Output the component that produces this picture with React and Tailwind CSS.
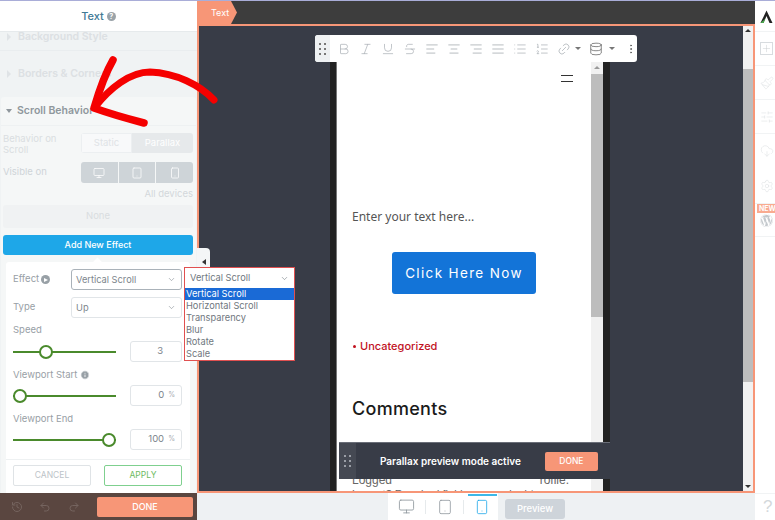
import React from "react";
import { Monitor, Tablet, Smartphone, Bold, Italic, Underline, Strikethrough, AlignLeft, AlignCenter, AlignRight, AlignJustify, List, ListOrdered, Link2, Database, EllipsisVertical, Plus, Paintbrush, SlidersHorizontal, CloudDownload, Settings, History, Undo2, Redo2, ChevronDown, Info } from "lucide-react";
import { FaWordpress } from "react-icons/fa";

const ui = "font-['Inter','Liberation_Sans',sans-serif]";

function Grip({ className = "" }) {
  return (
    <div className={"grid grid-cols-2 gap-x-[3px] gap-y-[3px] " + className}>
      {[0, 1, 2, 3, 4, 5].map((i) => <span key={i} className="w-[2px] h-[2px] bg-current" />)}
    </div>
  );
}

function Select({ text, strong }) {
  return (
    <div className={"flex-1 h-[21px] bg-white rounded-[3px] border flex items-center justify-between pl-[4px] pr-[5px] text-[9.25px] text-[#7d858c] " + (strong ? "border-[#aab2b9]" : "border-[#e1e5e8]")}>
      <span>{text}</span>
      <ChevronDown size={9} strokeWidth={1.5} className="text-[#7d858c]" />
    </div>
  );
}

function Slider({ knob, value, unit }) {
  return (
    <div className="flex items-center h-[21px]">
      <div className="relative w-[103px] h-[2px] bg-[#4a8a2c]">
        <span className={"absolute top-[-6px] w-[14px] h-[14px] rounded-full bg-white border-2 border-[#4a8a2c] " + knob} />
      </div>
      <div className="ml-[14px] w-[52px] h-[21px] rounded-[3px] border border-[#e1e5e8] flex items-center justify-end pr-[6px] text-[9.5px] text-[#7d858c] gap-[4px]">
        <span className={unit ? "" : "mr-[12px]"}>{value}</span>
        {unit && <span className="text-[7px] text-[#a5acb2]">%</span>}
      </div>
    </div>
  );
}

function Left() {
  return (
    <div className={"w-[197px] shrink-0 flex flex-col bg-[#f0f3f4] " + ui}>
      <div className="h-[31px] shrink-0 bg-white border-b border-[#e6eaec] flex items-center justify-center gap-[3px]">
        <span className="text-[11px] font-medium text-[#3f7a96]">Text</span>
        <span className="w-[9px] h-[9px] rounded-full bg-[#9aa3a9] text-white text-[7px] leading-[9px] font-bold text-center">?</span>
      </div>
      <div className="h-[65px] shrink-0">
        <div className="h-[19px] pb-[8px] pl-[7px] flex items-center gap-[7px] border-b border-[#e9edef]">
          <span className="w-0 h-0 border-y-[4px] border-y-transparent border-l-[4px] border-l-[#dfe3e6]" />
          <span className="text-[10.5px] font-semibold text-[#dce0e3]">Background Style</span>
        </div>
        <div className="h-[46px] pl-[7px] flex items-center gap-[7px]">
          <span className="w-0 h-0 border-y-[4px] border-y-transparent border-l-[4px] border-l-[#dfe3e6]" />
          <span className="text-[10.5px] font-semibold text-[#dce0e3]">Borders & Corners</span>
        </div>
      </div>
      <div className="flex-1 flex flex-col mx-px bg-[#f5f7f7] rounded-t-[3px] min-h-0">
        <div className="h-[29px] shrink-0 flex items-center pl-[5px] gap-[5px] border-b border-[#eef1f2]">
          <span className="w-0 h-0 border-x-[3px] border-x-transparent border-t-[4px] border-t-[#8f979d]" />
          <span className="text-[10.5px] font-semibold text-[#8f979d]">Scroll Behavior</span>
        </div>
        <div className="flex items-start pl-[2px] pr-[3px] pt-[7px] h-[36px] shrink-0">
          <span className="w-[78px] text-[9.5px] leading-[11px] text-[#dadee1]">Behavior on Scroll</span>
          <div className="flex-1 h-[20px] flex rounded-[3px] overflow-hidden text-[9.5px] text-[#dfe3e6]">
            <span className="w-[51px] bg-[#f8f9fa] border border-[#eceff1] flex items-center justify-center">Static</span>
            <span className="flex-1 bg-[#e6e9eb] text-white flex items-center justify-center">Parallax</span>
          </div>
        </div>
        <div className="flex items-center pl-[2px] pr-[3px] h-[21px] shrink-0">
          <span className="w-[78px] text-[9.5px] text-[#cfd4d8]">Visible on</span>
          <div className="flex-1 h-[21px] grid grid-cols-3 gap-px rounded-[3px] overflow-hidden">
            <span className="bg-[#ced4d8] flex items-center justify-center text-white"><Monitor size={12} strokeWidth={1.5} /></span>
            <span className="bg-[#ced4d8] flex items-center justify-center text-white"><Tablet size={12} strokeWidth={1.5} /></span>
            <span className="bg-[#ced4d8] flex items-center justify-center text-white"><Smartphone size={12} strokeWidth={1.5} /></span>
          </div>
        </div>
        <div className="h-[22px] shrink-0 flex items-center justify-end pr-[3px] text-[9.5px] text-[#d3d8db]">All devices</div>
        <div className="h-[23px] ml-[2px] mr-[3px] shrink-0 bg-[#f0f2f3] rounded-[3px] flex items-center justify-center text-[9.5px] text-[#d9dde0]">None</div>
        <div className="h-[20px] mt-[7px] ml-[2px] mr-[3px] shrink-0 bg-[#1ea7e8] rounded-[3px] flex items-center justify-center text-[9px] font-medium text-white">Add New Effect</div>
        <div className="relative mt-[7px] ml-[5px] w-[184px] flex-1 bg-white rounded-t-[3px] pl-[7px] pr-[8px] pt-[7px] flex flex-col">
          <span className="absolute top-[-3px] left-[88px] w-[7px] h-[7px] rotate-45 bg-white" />
          <div className="flex items-center h-[21px]">
            <span className="w-[58px] flex items-center gap-[2px] text-[9.5px] text-[#98a0a6]">
              Effect
              <span className="w-[9px] h-[9px] rounded-full bg-[#98a0a6] flex items-center justify-center">
                <span className="ml-px w-0 h-0 border-y-[2.5px] border-y-transparent border-l-[4px] border-l-white" />
              </span>
            </span>
            <Select text="Vertical Scroll" strong />
          </div>
          <div className="flex items-center h-[21px] mt-[7px]">
            <span className="w-[58px] text-[9.5px] text-[#98a0a6]">Type</span>
            <Select text="Up" />
          </div>
          <span className="mt-[6px] h-[12px] leading-[12px] text-[9.5px] text-[#98a0a6]">Speed</span>
          <div className="mt-[5px]"><Slider knob="left-[26px]" value="3" /></div>
          <span className="mt-[7px] h-[12px] flex items-center gap-[3px] text-[9.5px] text-[#98a0a6]">Viewport Start<Info size={10} strokeWidth={2} className="fill-[#98a0a6] text-white" /></span>
          <div className="mt-[4px]"><Slider knob="left-0" value="0" unit /></div>
          <span className="mt-[7px] h-[12px] leading-[12px] text-[9.5px] text-[#98a0a6]">Viewport End</span>
          <div className="mt-[4px]"><Slider knob="left-[89px]" value="100" unit /></div>
          <div className="mt-[9px] border-t border-[#eef1f2] -ml-[7px] -mr-[8px]" />
          <div className="mt-[5px] flex justify-between">
            <span className="w-[78px] h-[21px] border border-[#dfe3e6] rounded-[2px] flex items-center justify-center text-[8.5px] text-[#bcc3c8]">CANCEL</span>
            <span className="w-[78px] h-[21px] border border-[#7fd08f] rounded-[2px] flex items-center justify-center text-[8.5px] text-[#6dbb62]">APPLY</span>
          </div>
        </div>
      </div>
      <div className="h-[27px] shrink-0 bg-[#5a4640] flex items-center pl-[11px] pr-[4px]">
        <History size={12} className="text-[#75645f]" />
        <Undo2 size={12} className="ml-[16px] text-[#75645f]" />
        <Redo2 size={12} className="ml-[17px] text-[#75645f]" />
        <span className="ml-auto w-[96px] h-[20px] rounded-[2px] bg-[#f79677] text-white text-[9px] font-medium flex items-center justify-center">DONE</span>
      </div>
    </div>
  );
}

function Phone() {
  return (
    <div className="w-[280px] h-full bg-[#222222] flex px-[6px] pr-[7px] overflow-hidden">
      <div className="w-[255px] border-l border-[#777] bg-white flex flex-col pl-[15px] pr-[18px] overflow-hidden">
        <div className="self-end mt-[13px] w-[12px] h-[7px] border-y border-[#333] shrink-0" />
        <p className="mt-[127px] text-[12px] leading-[16px] text-[#555] font-['Noto_Sans',sans-serif] shrink-0">Enter your text here...</p>
        <div className={"mt-[27px] ml-[40px] w-[144px] h-[42px] shrink-0 bg-[#1374d8] rounded-[3px] flex items-center justify-center text-[13.5px] tracking-[1.35px] text-white " + ui}>Click Here Now</div>
        <div className={"mt-[44px] flex items-center gap-[4px] text-[11px] font-medium text-[#c1121f] shrink-0 " + ui}>
          <span className="ml-px w-[3px] h-[3px] rounded-full bg-[#c1121f]" />Uncategorized
        </div>
        <h2 className={"mt-[42px] text-[18px] leading-[24px] font-medium tracking-[0.3px] text-[#1a1a1a] shrink-0 " + ui}>Comments</h2>
        <div className="mt-[52px] flex justify-between text-[12px] leading-[14px] text-[#666] font-['Liberation_Sans',sans-serif] shrink-0">
          <span>Logged</span><span className="mr-[4px]">rofile.</span>
        </div>
        <p className="text-[11px] leading-[14px] text-[#666] whitespace-nowrap font-['Liberation_Sans',sans-serif] shrink-0">Logout? Required fields are marked *</p>
      </div>
      <div className="w-[12px] shrink-0 bg-[#f1f1f1] flex flex-col items-center">
        <span className="mt-[4px] w-0 h-0 border-x-[3px] border-x-transparent border-b-[3px] border-b-[#9a9a9a]" />
        <span className="mt-[5px] w-full h-[243px] bg-[#bdbdbd]" />
      </div>
    </div>
  );
}

function Canvas() {
  return (
    <div className="flex-1 min-w-0 flex flex-col">
      <div className={"h-[23px] shrink-0 bg-[#3d3d3d] flex items-stretch " + ui}>
        <div className="w-[40px] bg-[#f79677] flex items-center pl-[14px] text-[9px] text-white [clip-path:polygon(0_0,85%_0,100%_50%,85%_100%,0_100%)]">Text</div>
      </div>
      <div className="h-[469px] shrink-0 border-2 border-[#f79677] bg-[#383c47] flex">
        <div className="flex-1 min-w-0 pl-[131px] pt-[36px]"><Phone /></div>
        <div className="w-[10px] shrink-0 bg-[#f1f1f1] flex flex-col items-center">
          <span className="mt-[3px] w-0 h-0 border-x-[3px] border-x-transparent border-b-[3px] border-b-[#333]" />
          <span className="mt-[37px] w-full h-[313px] bg-[#bdbdbd]" />
          <span className="mt-auto mb-[3px] w-0 h-0 border-x-[3px] border-x-transparent border-t-[3px] border-t-[#333]" />
        </div>
      </div>
      <div className="flex-1 bg-[#eef1f3] flex items-start pl-[191px]">
        <div className="relative w-[110px] h-[27px] bg-white flex items-center text-[#8f979d]">
          <span className="w-[37px] flex justify-center"><Monitor size={17} strokeWidth={1.2} /></span>
          <span className="w-px h-[14px] bg-[#e6eaec]" />
          <span className="w-[37px] flex justify-center"><Tablet size={16} strokeWidth={1.2} /></span>
          <span className="w-px h-[14px] bg-[#e6eaec]" />
          <span className="w-[34px] pl-[2px] flex justify-center text-[#1ea7e8]"><Smartphone size={16} strokeWidth={1.2} /></span>
          <span className="absolute top-[1px] left-[80px] w-[29px] h-[2px] bg-[#3db8e8]" />
        </div>
        <div className={"ml-[7px] mt-[6px] w-[60px] h-[20px] rounded-[3px] bg-[#ced4da] text-white text-[9.5px] font-medium flex items-center justify-center " + ui}>Preview</div>
      </div>
    </div>
  );
}

function RailItem({ children, className = "" }) {
  return <div className={"shrink-0 flex items-center pl-[5px] border-b border-[#f1f3f4] text-[#dfe2e4] " + className}>{children}</div>;
}

function Rail() {
  return (
    <div className="w-[20px] shrink-0 bg-white flex flex-col overflow-hidden">
      <RailItem className="h-[31px]">
        <svg width="13" height="13" viewBox="0 0 13 13"><path d="M6.5 0.5 L12.5 13 L9.5 13 L6.5 6 L3.5 13 L0.5 13 Z" fill="#222" /><path d="M0.5 13 L5.5 8.5 L3.5 13 Z" fill="#4caf50" /></svg>
      </RailItem>
      <RailItem className="h-[34px]"><Plus size={13} strokeWidth={1} className="border border-[#d8dcdf] text-[#c5cacd]" /></RailItem>
      <RailItem className="h-[34px]"><Paintbrush size={14} strokeWidth={1} /></RailItem>
      <RailItem className="h-[34px]"><SlidersHorizontal size={14} strokeWidth={1} /></RailItem>
      <RailItem className="h-[34px] border-b-0"><CloudDownload size={14} strokeWidth={1} /></RailItem>
      <RailItem className="h-[36px] text-[#bfc4c8]"><Settings size={14} strokeWidth={1} /></RailItem>
      <div className="relative h-[33px] shrink-0 border-b border-[#f1f3f4] flex items-center pl-[5px]">
        <span className={"absolute top-0 left-[2px] w-[22px] h-[9px] bg-[#f9ab90] text-white text-[7px] leading-[9px] font-bold pl-[2px] " + ui}>NEW</span>
        <FaWordpress size={13} className="mt-[1px] text-[#c4c9cd]" />
      </div>
      <div className="flex-1" />
      <div className="h-[27px] shrink-0 flex items-center pl-[8px] border-t border-[#f1f3f4] text-[17px] text-[#d4d8db] font-['Liberation_Sans',sans-serif]">?</div>
    </div>
  );
}

function Toolbar() {
  const cls = "text-[#a8aeb3] shrink-0";
  return (
    <div className="absolute left-[315px] top-[34px] w-[322px] h-[27px] bg-white rounded-[3px] flex items-center overflow-hidden">
      <div className="w-[15px] h-full bg-[#eef1f3] flex items-center justify-center text-[#777]"><Grip /></div>
      <div className="flex items-center pl-[7px] gap-[8px]">
        <Bold size={14} strokeWidth={1.2} className={cls} />
        <Italic size={14} strokeWidth={1.2} className={cls} />
        <Underline size={14} strokeWidth={1.2} className={cls} />
        <Strikethrough size={14} strokeWidth={1.2} className={cls} />
        <AlignLeft size={14} strokeWidth={1.4} className={cls} />
        <AlignCenter size={14} strokeWidth={1.4} className={cls} />
        <AlignRight size={14} strokeWidth={1.4} className={cls} />
        <AlignJustify size={14} strokeWidth={1.4} className={cls} />
        <List size={14} strokeWidth={1.2} className={cls} />
        <ListOrdered size={14} strokeWidth={1.2} className={cls} />
        <Link2 size={14} strokeWidth={1.2} className={"-rotate-45 " + cls} />
        <span className="-ml-[4px] w-0 h-0 border-x-[3px] border-x-transparent border-t-[3px] border-t-[#777]" />
        <Database size={14} strokeWidth={1.5} className="text-[#777] shrink-0" />
        <span className="-ml-[2px] w-0 h-0 border-x-[3px] border-x-transparent border-t-[3px] border-t-[#777]" />
        <EllipsisVertical size={12} strokeWidth={2} className="text-[#666] ml-[2px] shrink-0" />
      </div>
    </div>
  );
}

function Dropdown() {
  const items = ["Vertical Scroll", "Horizontal Scroll", "Transparency", "Blur", "Rotate", "Scale"];
  return (
    <div className={"absolute left-[184px] top-[266px] w-[111px] h-[94px] border border-[#e05050] bg-white text-[9.25px] text-[#6f777e] " + ui}>
      <div className="h-[20px] flex items-center justify-between pl-[5px] pr-[5px]">
        <span>Vertical Scroll</span><ChevronDown size={9} strokeWidth={1.5} />
      </div>
      {items.map((t, i) => (
        <div key={t} className={"h-[12px] leading-[12px] pl-px " + (i === 0 ? "bg-[#1a6ad6] text-white" : "")}>{t}</div>
      ))}
    </div>
  );
}

function ParallaxBar() {
  return (
    <div className={"absolute left-[339px] top-[441px] w-[271px] h-[37px] bg-[#383c47] border-t border-[#6a6e78] flex items-center " + ui}>
      <div className="w-[17px] h-full bg-[#454953] flex items-center justify-center text-[#9a9ea6]"><Grip /></div>
      <span className="ml-[24px] text-[10px] font-semibold text-white">Parallax preview mode active</span>
      <span className="ml-[24px] w-[53px] h-[19px] rounded-[2px] bg-[#f79677] text-white text-[8.5px] font-medium flex items-center justify-center">DONE</span>
    </div>
  );
}

function Arrow() {
  return (
    <svg className="absolute left-0 top-[-1px] pointer-events-none" width="240" height="140" viewBox="0 0 240 140" fill="none">
      <path d="M214 100 C200 85 176 73 150 72 C130 72 110 88 95 107" stroke="#f50000" strokeWidth="7" strokeLinecap="round" />
      <path d="M113 60 C106 72 100 88 94 108 C108 113 125 118 144 123" stroke="#f50000" strokeWidth="7.5" strokeLinecap="round" strokeLinejoin="round" />
    </svg>
  );
}

export default function App() {
  return (
    <div className="relative w-[775px] h-[520px] overflow-hidden bg-white border-t border-[#a9add8] flex">
      <Left />
      <Canvas />
      <Rail />
      <div className="absolute left-[197px] top-[247px] w-[13px] h-[22px] bg-[#f4f6f7] rounded-tr-[4px] flex items-end justify-center pb-[5px]">
        <span className="w-0 h-0 border-y-[3px] border-y-transparent border-r-[4px] border-r-[#333]" />
      </div>
      <Toolbar />
      <ParallaxBar />
      <Dropdown />
      <Arrow />
    </div>
  );
}
